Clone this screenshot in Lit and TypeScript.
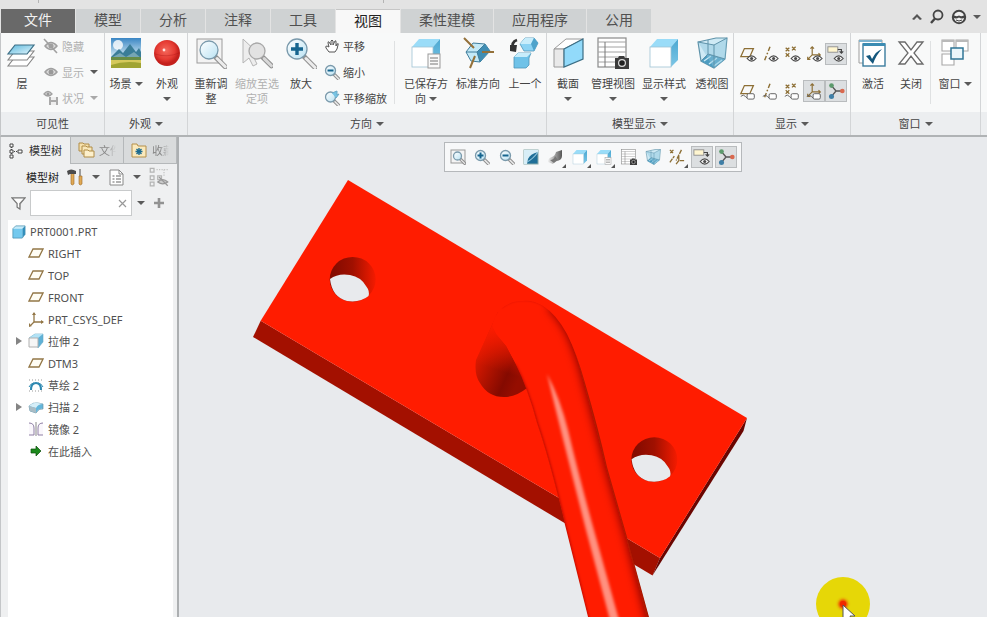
import { LitElement, html, svg, css, nothing, TemplateResult, SVGTemplateResult } from "lit";
import { customElement, state } from "lit/decorators.js";

type Art = SVGTemplateResult;

const draw = (art: Art, size: number, box = size): TemplateResult =>
  html`<svg class="icon" width=${size} height=${size} viewBox="0 0 ${box} ${box}" aria-hidden="true">${art}</svg>`;

/* ---------- shared fragments ---------- */
const lens = (cx: number, cy: number, r: number, w: number, mono = false): Art => svg`
  <path d="M${cx + r * 0.75} ${cy + r * 0.8}L${cx + r * 1.8} ${cy + r * 1.85}" stroke="#909090" stroke-width=${w + 2} stroke-linecap="round"/>
  <path d="M${cx + r * 0.9} ${cy + r * 0.95}L${cx + r * 1.8} ${cy + r * 1.85}" stroke=${mono ? "#d8d8d8" : "#ececec"} stroke-width=${w} stroke-linecap="round"/>
  <circle cx=${cx} cy=${cy} r=${r} fill=${mono ? "#e2e2e2" : "url(#glass)"} stroke=${mono ? "#a8a8a8" : "#7a9aac"} stroke-width="1.3"/>`;

const eye = (x: number, y: number, c = "#4a4a4a"): Art => svg`
  <path d="M${x} ${y}q5 -6 10 0q-5 6 -10 0z" fill="#f4f4f4" stroke=${c} stroke-width="1.3"/>
  <circle cx=${x + 5} cy=${y} r="1.7" fill=${c}/>`;

const tag = svg`
  <path d="M2 16q3 -3 5 0t5 2" fill="none" stroke="#666" stroke-width="1.1"/>
  <rect x="9" y="13" width="8" height="6" rx="1.5" fill="#fff" stroke="#666" stroke-width="1.1"/>`;

const plane = svg`<path d="M6 4h10l-4 9H2z" fill="none" stroke="#8d6f35" stroke-width="1.4"/>`;
const axis = svg`<path d="M10 2L4 17" stroke="#8d6f35" stroke-width="1.6" stroke-dasharray="5 2 2 2"/>`;
const points = svg`<path d="M3 3l4 4m0-4l-4 4M10 2l4 4m0-4l-4 4M3 9l4 4m0-4l-4 4" stroke="#8d6f35" stroke-width="1.4"/>`;
const csys = svg`<path d="M8 2v9h9M8 11l-5 5M6 4l2-2 2 2M15 9l2 2-2 2M3 13v3h3" fill="none" stroke="#8d6f35" stroke-width="1.3"/>`;
const noteArt = svg`
  <rect x="1" y="2" width="11" height="6" fill="#fff6d0" stroke="#8d8d8d"/>
  <path d="M12 5h4v4M14 7l2 2 2-2" fill="none" stroke="#444" stroke-width="1.3"/>${eye(8, 15)}`;
const spin = svg`
  <path d="M5 4L10 10L17 10M10 10L5 16" fill="none" stroke="#555" stroke-width="1.5"/>
  <circle cx="5" cy="4" r="2.6" fill="#5c9a6c"/><circle cx="17" cy="10" r="2.6" fill="#d9694f"/>
  <circle cx="5" cy="16" r="2.8" fill="#3f7fa6"/>`;
const cubeArt = svg`
  <path d="M2 10L9 2H30L23 10z" fill="#9adcf8"/><path d="M23 10L30 2V23L23 30z" fill="url(#cubeSide)"/>
  <rect x="2" y="10" width="21" height="20" fill="#fff" stroke="#9fc3d4" stroke-width=".8"/>`;
const sheet = svg`
  <rect x="18" y="17" width="12" height="14" fill="#fafafa" stroke="#999"/>
  <path d="M20 21h8M20 24h8M20 27h8" stroke="#777"/>`;
const camera = svg`
  <path d="M18 21h3l1-2h5l1 2h4v11H18z" fill="#3c3c3c"/><circle cx="25" cy="26" r="3.4" fill="#222" stroke="#ddd" stroke-width="1.2"/>`;
const table = svg`
  <rect x="1" y="1" width="28" height="29" fill="#fff" stroke="#8a8a8a" stroke-width="1.2"/>
  <path d="M1 5h28M1 10h28M1 15h28M1 20h28M1 25h28" stroke="#a2a2a2"/><path d="M8 5v25" stroke="#777"/>`;
const glassBox = svg`
  <path d="M2 5L20 1H31L29 22L18 31L5 24z" fill="#cfeaf5" stroke="#5f93aa" stroke-width="1.2"/>
  <path d="M5 24L12 17L29 22L18 31z" fill="#4d9cc0"/><path d="M8 24l7-5M13 27l8-6M18 29l8-6" stroke="#c9e9f5" stroke-width="1.4"/>
  <path d="M2 5L18 8L31 1L29 22L18 31z" fill="#8ac5de" fill-opacity=".45"/>
  <path d="M2 5L18 8L31 1M18 8V31M12 3V17L5 24M12 17L29 22" fill="none" stroke="#5f93aa"/>`;
const gem = (x: number, y: number): Art => svg`
  <path d="M${x} ${y + 6}l5-6h9l4 5-4 8h-10z" fill="#8bd3f4" stroke="#4e96b8" stroke-width=".8"/>
  <path d="M${x} ${y + 6}l5-6h9l-3 6z" fill="#c8edfb"/><path d="M${x + 11} ${y + 6}l3-6 4 5-4 8z" fill="#4ea3cb"/>`;

/* ---------- ribbon art, 32px ---------- */
const A: Record<string, Art> = {
  layers: svg`
    <path d="M9 20h19l-7 9H2z" fill="#fff" stroke="#858585" stroke-width="1.1"/>
    <path d="M9 14h19l-7 9H2z" fill="#fff" stroke="#858585" stroke-width="1.1"/>
    <path d="M9 8h19l-7 9H2z" fill="url(#sheetBlue)" stroke="#3c6f86" stroke-width="1.2"/>`,
  scene: svg`
    <rect x="1" y="1" width="30" height="30" fill="url(#sky)"/><circle cx="8" cy="8" r="5" fill="#fff" opacity=".8"/>
    <path d="M1 20L9 12l4 4 7-9 6 8 3-4 2 4v6H1z" fill="#3a7d98"/><path d="M1 21l9-5 6 4 8-5 7 6v2H1z" fill="#76a6b4"/>
    <path d="M1 20h30v11H1z" fill="#d5c95c"/><path d="M1 20h30v3H1z" fill="#678c46"/><path d="M1 28q14-5 30-2v5H1z" fill="#a0a433"/>`,
  ball: svg`<circle cx="16" cy="16" r="13" fill="url(#redBall)"/><path d="M4 17q12 4 24-1" stroke="#a91414" fill="none" opacity=".35"/><circle cx="13" cy="13" r="1.4" fill="#ffe4e0"/>`,
  refit: svg`<rect x="2" y="2" width="25" height="24" fill="#f3f3f3" stroke="#9b9b9b"/>${lens(14, 13, 9, 3)}`,
  zoomSel: svg`<path d="M2 2V26l6-5 4 8 4-2-4-8h8z" fill="#ededed" stroke="#b5b5b5"/>${lens(16, 14, 8, 3, true)}`,
  zoomIn: svg`${lens(12, 12, 10, 3)}<path d="M12 6v12M6 12h12" stroke="#16658f" stroke-width="3.4"/>`,
  saved: svg`${cubeArt}${sheet}`,
  orient: svg`
    <path d="M4 15L11 6l12 1 5 7-10 11L9 24z" fill="#c3e9f7" stroke="#3f7d9b"/>
    <path d="M15 15l8-8 5 7-10 11z" fill="#3f8db3"/><path d="M4 15h11l8-8M15 15l3 10" fill="none" stroke="#3f7d9b"/>
    <path d="M2 1L12 11M20 15h12M13 19L8 31" stroke="#94713a" stroke-width="2"/>`,
  previous: svg`<path d="M8 3Q2 5 4 12" fill="none" stroke="#333" stroke-width="2.600"/><path d="M1 8l7 0-1 7-6-1z" fill="#333"/>
    ${gem(11, 1)}<path d="M5 20l4-4h13l-2 5v7l-3 3H5z" fill="#6fc2e8" stroke="#4e96b8" stroke-width=".8"/><path d="M5 20l4-4h13l-4 4z" fill="#c8edfb"/>`,
  section: svg`
    <path d="M2 12L14 2H31L12 12z" fill="#fff" stroke="#9a9a9a"/><path d="M2 12h10v18H2z" fill="#e9e9e9" stroke="#9a9a9a"/>
    <path d="M12 12L31 2V22L12 30z" fill="#92dafa" stroke="#3b6e85" stroke-width="1.2"/>`,
  views: svg`${table}${camera}`,
  style: cubeArt,
  perspective: glassBox,
  activate: svg`
    <path d="M2 3h23v23H2z" fill="#fff" stroke="#9c9c9c"/><path d="M2 3h23v2H2z" fill="#7fb4cf"/>
    <rect x="6" y="7" width="22" height="22" fill="#fff" stroke="#3b7d9e" stroke-width="1.4"/><path d="M6 6h22v3H6z" fill="#3b8cb3"/>
    <path d="M9 19l4-1 2 4q4-8 10-10-6 6-9 15z" fill="#14577d"/>`,
  close: svg`<path d="M4 5h6l6 8 6-8h6l-9 11 9 11h-6l-6-8-6 8H4l9-11z" fill="#fff" stroke="#6b6b6b" stroke-width="1.3"/>`,
  windows: svg`
    <path d="M3 3h12v11H3zM17 3h12v11H17zM3 17h12v11H3z" fill="#fff" stroke="#a8a8a8" stroke-width="1.1"/><path d="M3 3h12v2H3zM17 3h12v2H17z" fill="#b9b9b9"/>
    <rect x="12" y="11" width="12" height="11" fill="#eaf6fb" stroke="#2f7596" stroke-width="1.5"/>`,
};

/* ---------- small art, 16px ---------- */
const S: Record<string, Art> = {
  hide: svg`<path d="M2 8q6-7 12 0q-6 7-12 0z" fill="#ddd" stroke="#a0a0a0" stroke-width="1.5"/><circle cx="8" cy="8" r="2.5" fill="#a0a0a0"/><path d="M1 1L14 15" stroke="#a0a0a0" stroke-width="1.6"/>`,
  show: svg`<path d="M2 8q6-7 12 0q-6 7-12 0z" fill="#ddd" stroke="#a0a0a0" stroke-width="1.5"/><circle cx="8" cy="8" r="2.5" fill="#999"/>`,
  status: svg`<path d="M1 4q4-5 8 0q-4 4-8 0z" fill="#ddd" stroke="#a0a0a0" stroke-width="1.3"/><circle cx="5" cy="4" r="1.5" fill="#999"/><path d="M6 7h9v8H6z" fill="#aaa"/><path d="M8 7h5v3H8zM8 12h5v3H8z" fill="#eee"/>`,
  pan: svg`<path d="M5 14L2 10Q1 8 3 8L5 9 4 5Q4 3 5 4L7 7 7 3Q8 1 9 3L9 7 11 3Q12 2 12 4L12 8 13 6Q15 5 14 7L13 11 11 14z" fill="#fff" stroke="#555"/>`,
  zoomOut: svg`${lens(6.5, 6.5, 5, 1.5)}<path d="M3.5 6.5h6" stroke="#16658f" stroke-width="2"/>`,
  zoomInS: svg`${lens(6.5, 6.5, 5, 1.5)}<path d="M3.5 6.5h6M6.5 3.5v6" stroke="#16658f" stroke-width="2"/>`,
  panZoom: svg`${lens(6.5, 7, 5, 1.5)}<path d="M8 3l5-2v4l2-1-3 4" fill="#76c4e4" stroke="#6aa9c6"/>`,
  refitS: svg`<rect x="1" y="1" width="14" height="13" fill="#f4f4f4" stroke="#999"/>${lens(7.5, 7, 4, 1.2)}`,
  repaint: svg`<rect x="1" y="1" width="14" height="14" fill="#1f6f98" stroke="#8aa"/><path d="M1 1h14v2Q7 5 5 10l-1 5H1z" fill="#d8eef7"/><path d="M15 3Q10 10 4 13" stroke="#8fc3da" stroke-width="1.200" fill="none"/>`,
  render: svg`<path d="M1 13Q1 9 5 8Q8 7 9 3L15 1v6Q15 12 8 12L6 15z" fill="url(#chrome)"/><path d="M3 11q4 0 5-4l3 4-4 3z" fill="#777"/>`,
  folders: svg`<path d="M1 1h4l1 1h5v7H1z" fill="#f6e2ae" stroke="#b08c47"/><path d="M4 4h4l1 1h5v7H4z" fill="#f8e7b9" stroke="#b08c47"/><path d="M6 8h4l1 1h5v6H6z" fill="#fdf0cc" stroke="#b08c47"/>`,
  favorite: svg`<path d="M1 2h5l1 2h8v11H1z" fill="#fae9bc" stroke="#b5904a"/><path d="M8 6v7M4.500 9.500h7M5.500 7l5 5M10.500 7l-5 5" stroke="#1e6c90" stroke-width="1.4"/>`,
  treeTab: svg`<path d="M2 1h3v3H2zM2 7h3v3H2zM2 12h3v3H2zM10 7h4v3h-4z" fill="#fff" stroke="#444"/><path d="M3.500 4v3M3.500 10v2M6 8.500h3" stroke="#444" stroke-dasharray="1 1"/>`,
  tools: svg`<path d="M4 4h3v11q-2 2-3 0z" fill="#e0a955" stroke="#9a6a26" stroke-width=".6"/><path d="M0 2q4-3 9 0v3H3L1 6z" fill="#4b4b4b"/><path d="M13 0v8" stroke="#777" stroke-width="1.400"/><path d="M12 7h3v8q-2 2-3 0z" fill="#e0a955" stroke="#9a6a26" stroke-width=".6"/>`,
  list: svg`<path d="M2 1h9l4 4v11H2z" fill="#fff" stroke="#888"/><path d="M11 1v4h4" fill="none" stroke="#888"/><path d="M4.500 7h2M4.500 10h2M4.500 13h2M8 7h5M8 10h5M8 13h5" stroke="#666" stroke-width="1.200"/>`,
  treeGrey: svg`<path d="M1 1h3v3H1zM1 7h3v3H1zM1 12h3v3H1zM7 7h3v3H7z" fill="none" stroke="#b4b4b4"/><path d="M6 2h9M12 2v5" stroke="#c4c4c4" stroke-dasharray="1 1"/><path d="M7 12q4-4 8 0q-4 3-8 0z" fill="#ccc" stroke="#999"/><path d="M8 8l7 7" stroke="#999"/>`,
  funnel: svg`<path d="M1 2h14L9.500 8v6l-3-2V8z" fill="#fdfdfd" stroke="#777" stroke-width="1.300"/><path d="M9 8l5-5v1l-4 5v5z" fill="#888"/>`,
  part: svg`<path d="M2 5l3-3h10l-3 3z" fill="#c7ecfa"/><path d="M12 5l3-3v9l-3 4z" fill="#2f8fbd"/><path d="M2 5h10v10H2z" fill="#74c9ee"/><path d="M2 5l3-3h10v9l-3 4H2z" fill="none" stroke="#4a92b2" stroke-width=".8"/>`,
  plane: svg`<path d="M5 4h10l-4 8H1z" fill="#fffdf4" stroke="#937747" stroke-width="1.300"/>`,
  csys: svg`<path d="M6 2v9h9" fill="none" stroke="#937747" stroke-width="1.300"/><path d="M6 11l-3 3" stroke="#937747" stroke-width="1.300"/><path d="M4 4l2-3 2 3zM13 9l3 2-3 2zM1 12l3 3-3 1z" fill="#937747"/>`,
  extrude: svg`<path d="M1 5l6-4h8v8l-5 6" fill="#5fb1d6" stroke="#69a9c4" stroke-width=".6"/><path d="M1 5l6-4h8l-5 4z" fill="#b2e2f5"/><path d="M1 5h9v9H1z" fill="#f6f6f6" stroke="#b0b0b0"/>`,
  sketch: svg`<path d="M1 3h14M1 14h14" stroke="#999" stroke-dasharray="1 2"/><path d="M3 13q0-7 5-7t5 7" fill="none" stroke="#2f89b1" stroke-width="2"/><path d="M1 10q2-4 5-4M15 10q-2-4-5-4" fill="none" stroke="#2f89b1"/>`,
  sweep: svg`<path d="M1 7q4-4 9-3l5 1v5q-4-1-7 4l-6-2z" fill="#63b6db" stroke="#6a95a8" stroke-width=".7"/><path d="M1 7q4-4 9-3l5 1q-5 0-7 4z" fill="#d5eef8"/><path d="M1 7l7 2v5l-6-2z" fill="#a9bcc5"/>`,
  mirror: svg`<path d="M1 2q5 0 5 5v7H1M15 2q-5 0-5 5v7h5" fill="#faf7fc" stroke="#8f7fa5"/><path d="M8 1v14" stroke="#888"/>`,
  insert: svg`<path d="M3 6h5V3l5 5-5 5v-3H3z" fill="#1d8a1d" stroke="#0c4d0c" stroke-width=".7"/>`,
};

interface Big { art: string; lines: string[]; w: string; caret?: "inline" | "below"; dim?: boolean; }
interface Small { art: string; label: string; caret?: boolean; dim?: boolean; }

const TABS = ["文件", "模型", "分析", "注释", "工具", "视图", "柔性建模", "应用程序", "公用"];

const TREE: { art: string; label: string; open?: boolean }[] = [
  { art: "plane", label: "RIGHT" }, { art: "plane", label: "TOP" }, { art: "plane", label: "FRONT" },
  { art: "csys", label: "PRT_CSYS_DEF" }, { art: "extrude", label: "拉伸 2", open: true },
  { art: "plane", label: "DTM3" }, { art: "sketch", label: "草绘 2" }, { art: "sweep", label: "扫描 2", open: true },
  { art: "mirror", label: "镜像 2" }, { art: "insert", label: "在此插入" },
];

@customElement("app-root")
export class AppRoot extends LitElement {
  @state() private tab = "视图";

  static styles = css`
    :host {
      display: flex; flex-direction: column; height: 100vh; min-height: 480px; overflow: hidden;
      background: #e3e3e3; color: #444; font: 11px/15px "Noto Sans", "Noto Sans CJK SC", sans-serif;
    }
    * { box-sizing: border-box; }
    button { font: inherit; color: inherit; background: none; border: 0; padding: 0; margin: 0; }
    .icon { display: block; flex: none; }
    .caret { display: inline-block; border: 4px solid transparent; border-top-color: #5a5a5a; border-bottom: 0; flex: none; }
    .dim { color: #b0b0b0; }
    .soft { opacity: .5; }
    .quick { height: 9px; flex: none; display: flex; padding-left: 38px; gap: 344px; }
    .tick { width: 1px; height: 3px; background: #b4b4b4; }
    .tabs { display: flex; gap: 1px; height: 24px; flex: none; padding-left: 1px; }
    .tab { width: 64px; background: #cfd2d3; font-size: 14px; line-height: 20px; color: #505050; padding-bottom: 2px; }
    .tab.wide { width: 92px; }
    .tab.file { width: 74px; background: #696969; color: #f2f2f2; }
    .tab.on { background: #f8f8f8; color: #222; border-top: 1px solid #c6c6c6; }
    .corner { margin-left: auto; display: flex; align-items: center; gap: 6px; padding: 0 6px 8px 0; }
    .ribbon { display: flex; flex: none; background: #f8f9f9; border-left: 1px solid #c4c6c8; border-bottom: 2px solid #b0b3b5; }
    .group { display: flex; flex-direction: column; border-right: 1px solid #d3d5d7; flex: none; }
    .rest { flex: 1; display: flex; flex-direction: column; }
    .rest::before { content: ""; height: 79px; }
    .rest::after { content: ""; height: 23px; background: #eceef0; }
    .body { display: flex; height: 79px; }
    .foot { height: 23px; display: flex; align-items: center; justify-content: center; gap: 4px; background: #eceef0; }
    .big { display: flex; flex-direction: column; align-items: center; padding-top: 4px; gap: 7px; white-space: nowrap; line-height: 15px; }
    .w38 { width: 38px; } .w40 { width: 40px; } .w42 { width: 42px; } .w46 { width: 46px; }
    .w48 { width: 48px; } .w52 { width: 52px; } .w54 { width: 54px; }
    .cap { display: flex; flex-direction: column; align-items: center; }
    .line { display: flex; align-items: center; gap: 3px; height: 15px; }
    .stack { display: flex; flex-direction: column; width: 61px; }
    .stack.long { width: 72px; padding-left: 2px; }
    .small { display: flex; align-items: center; gap: 3px; height: 26px; white-space: nowrap; }
    .small .caret { margin-left: 3px; }
    .push { padding: 0 1px 0 3px; }
    .rule { width: 1px; background: #dfe1e2; margin: 8px 0; }
    .rule.gap { margin-right: 5px; }
    .datum { display: grid; grid-template-columns: repeat(5, 22px); grid-auto-rows: 22px; row-gap: 15px; padding: 10px 3px; height: 79px; }
    .cell { display: grid; place-items: center; width: 22px; height: 22px; border: 1px solid transparent; }
    .cell.on { background: #dcdfe1; border-color: #b9bcbe; }
    .main { flex: 1; display: flex; min-height: 0; }
    .side { width: 179px; flex: none; display: flex; flex-direction: column; background: #eff0f1; border-left: 1px solid #c4c6c8; border-right: 2px solid #acafb1; }
    .ptabs { display: flex; gap: 1px; height: 27px; padding-right: 1px; background: #b5b8ba; }
    .ptab { display: flex; align-items: center; gap: 4px; flex: 1; padding-left: 7px; background: #d9dbdc; color: #888; border-bottom: 1px solid #b5b8ba; }
    .ptab.on { flex: none; width: 69px; background: #eff0f1; color: #333; border-bottom: 0; gap: 5px; }
    .clip { width: 17px; overflow: hidden; white-space: nowrap; text-align: left; mask-image: linear-gradient(90deg, #000 50%, transparent); }
    .bar { display: flex; align-items: center; height: 26px; padding-left: 25px; gap: 8px; color: #222; }
    .filter { display: flex; align-items: center; height: 26px; padding-left: 10px; gap: 4px; margin-bottom: 4px; }
    .field { display: flex; align-items: center; width: 102px; height: 26px; background: #fff; border: 1px solid #c8cacb; padding-right: 4px; }
    .field input { flex: 1; min-width: 0; border: 0; outline: 0; background: none; font: inherit; }
    .filter .caret { margin-left: 1px; }
    .plus { margin-left: 4px; }
    .tree { flex: 1; margin: 0 4px 0 7px; padding: 0; list-style: none; background: #fff; overflow: hidden; color: #505050; }
    .node { display: flex; align-items: center; height: 22px; gap: 4px; padding-left: 8px; }
    .node.root { padding-left: 3px; }
    .twist { width: 6px; margin-right: 2px; border: 4px solid transparent; border-left: 6px solid #848484; border-right: 0; }
    .twist.none { border-left-color: transparent; }
    .view { flex: 1; min-width: 0; position: relative; background: #e8eaed; }
    .model { display: block; width: 100%; height: 100%; }
    .float { position: absolute; left: 265px; top: 5px; width: 298px; height: 30px; display: flex; justify-content: space-between; align-items: center; padding: 0 4px 0 2px; background: #f7f8f9; border: 1px solid #b5b8bb; }
    .more { position: absolute; margin: 17px 0 0 18px; border: 2px solid #555; border-top-color: transparent; border-left-color: transparent; }
  `;

  private big(b: Big) {
    const last = b.lines.length - 1;
    return html`<button class="big ${b.w} ${b.dim ? "dim" : ""}">
      ${draw(A[b.art], 32)}
      <span class="cap">
        ${b.lines.map((t, i) => html`<span class="line">${t}${b.caret === "inline" && i === last ? html`<i class="caret"></i>` : nothing}</span>`)}
        ${b.caret === "below" ? html`<span class="line"><i class="caret"></i></span>` : nothing}
      </span>
    </button>`;
  }

  private small(s: Small) {
    return html`<button class="small ${s.dim ? "dim" : ""}">${draw(S[s.art], 16)}${s.label}${s.caret ? html`<i class="caret ${s.label === "状况" ? "soft" : ""}"></i>` : nothing}</button>`;
  }

  private foot(label: string, caret = true) {
    return html`<div class="foot">${label}${caret ? html`<i class="caret"></i>` : nothing}</div>`;
  }

  private cell(art: Art, label: string, on = false, box = 20, more = false) {
    return html`<button class="cell ${on ? "on" : ""}" aria-label=${label}>${draw(art, box === 20 ? 18 : 16, box)}${more ? html`<i class="more"></i>` : nothing}</button>`;
  }

  private ribbon() {
    return html`<section class="ribbon" aria-label="视图">
      <div class="group">
        <div class="body">
          ${this.big({ art: "layers", lines: ["层"], w: "w42" })}
          <div class="stack">
            ${this.small({ art: "hide", label: "隐藏", dim: true })}
            ${this.small({ art: "show", label: "显示", dim: true, caret: true })}
            ${this.small({ art: "status", label: "状况", dim: true, caret: true })}
          </div>
        </div>
        ${this.foot("可见性", false)}
      </div>
      <div class="group">
        <div class="body">
          ${this.big({ art: "scene", lines: ["场景"], w: "w42", caret: "inline" })}
          ${this.big({ art: "ball", lines: ["外观"], w: "w40", caret: "below" })}
        </div>
        ${this.foot("外观")}
      </div>
      <div class="group">
        <div class="body">
          ${this.big({ art: "refit", lines: ["重新调", "整"], w: "w46" })}
          ${this.big({ art: "zoomSel", lines: ["缩放至选", "定项"], w: "w46", dim: true })}
          ${this.big({ art: "zoomIn", lines: ["放大"], w: "w42" })}
          <div class="stack long">
            ${this.small({ art: "pan", label: "平移" })}
            ${this.small({ art: "zoomOut", label: "缩小" })}
            ${this.small({ art: "panZoom", label: "平移缩放" })}
          </div>
          <div class="rule gap"></div>
          ${this.big({ art: "saved", lines: ["已保存方", "向"], w: "w52", caret: "inline" })}
          ${this.big({ art: "orient", lines: ["标准方向"], w: "w52" })}
          ${this.big({ art: "previous", lines: ["上一个"], w: "w42" })}
        </div>
        ${this.foot("方向")}
      </div>
      <div class="group">
        <div class="body">
          ${this.big({ art: "section", lines: ["截面"], w: "w42", caret: "below" })}
          ${this.big({ art: "views", lines: ["管理视图"], w: "w48", caret: "below" })}
          ${this.big({ art: "style", lines: ["显示样式"], w: "w54", caret: "below" })}
          ${this.big({ art: "perspective", lines: ["透视图"], w: "w42" })}
        </div>
        ${this.foot("模型显示")}
      </div>
      <div class="group">
        <div class="datum">
          ${this.cell(svg`${plane}${eye(9, 15)}`, "平面显示")}
          ${this.cell(svg`${axis}${eye(9, 15)}`, "轴显示")}
          ${this.cell(svg`${points}${eye(9, 15)}`, "点显示")}
          ${this.cell(svg`${csys}${eye(9, 15)}`, "坐标系显示")}
          ${this.cell(noteArt, "注释显示", true)}
          ${this.cell(svg`${plane}${tag}`, "平面标记")}
          ${this.cell(svg`${axis}${tag}`, "轴标记")}
          ${this.cell(svg`${points}${tag}`, "点标记")}
          ${this.cell(svg`${csys}${tag}`, "坐标系标记", true)}
          ${this.cell(spin, "旋转中心", true)}
        </div>
        ${this.foot("显示")}
      </div>
      <div class="group">
        <div class="body push">
          ${this.big({ art: "activate", lines: ["激活"], w: "w38" })}
          ${this.big({ art: "close", lines: ["关闭"], w: "w38" })}
          <div class="rule"></div>
          ${this.big({ art: "windows", lines: ["窗口"], w: "w48", caret: "inline" })}
        </div>
        ${this.foot("窗口")}
      </div>
      <div class="rest"></div>
    </section>`;
  }

  private side() {
    return html`<aside class="side">
      <div class="ptabs">
        <button class="ptab on">${draw(S.treeTab, 16)}模型树</button>
        <button class="ptab">${draw(S.folders, 17, 17)}<span class="clip">文件</span></button>
        <button class="ptab">${draw(S.favorite, 17, 17)}<span class="clip">收藏</span></button>
      </div>
      <div class="bar">模型树
        ${draw(S.tools, 17, 17)}<i class="caret"></i>${draw(S.list, 17, 17)}<i class="caret"></i>${draw(S.treeGrey, 20, 16)}
      </div>
      <div class="filter">
        ${draw(S.funnel, 15, 16)}
        <span class="field"><input type="text" aria-label="过滤" />
          <button aria-label="清除">${draw(svg`<path d="M1 1l7 7M8 1l-7 7" stroke="#999" stroke-width="1.2"/>`, 9)}</button></span>
        <i class="caret"></i>
        <button class="plus" aria-label="添加">${draw(svg`<path d="M6 1v10M1 6h10" stroke="#929292" stroke-width="2.6"/>`, 12)}</button>
      </div>
      <ul class="tree">
        <li class="node root">${draw(S.part, 15, 16)}PRT0001.PRT</li>
        ${TREE.map((n) => html`<li class="node"><i class="twist ${n.open ? "" : "none"}"></i>${draw(S[n.art], 16)}${n.label}</li>`)}
      </ul>
    </aside>`;
  }

  private model() {
    const rod = "M588 617L565 525Q550 461 537 423Q528 389 515 363L506 346L496 334L492 326Q494 316 501 309Q510 301 523 301Q533 300 543 306Q556 314 567 334Q577 354 585 383Q598 427 607 467L627 537L649 617L649 630L590 630z";
    const leg = "M498 312L476 360Q474 375 480 383Q488 397 504 397Q516 397 527 388L540 350L520 315z";
    const hole = svg`
      <ellipse cx="352.700" cy="279.300" rx="23" ry="22.400" fill="url(#bore)"/>
      <path d="M330 279Q338 273 350 275Q361 277 366 286Q370 291 368.500 296Q360 303 347 301Q332 297 330 279z" fill="#e8eaed"/>`;
    return html`<svg class="model" viewBox="179 137 808 480" preserveAspectRatio="xMinYMin slice" role="img" aria-label="PRT0001">
      <defs>
        <linearGradient id="glass" x1="0" y1="0" x2="1" y2="1"><stop offset="0" stop-color="#fff"/><stop offset="1" stop-color="#b9e2f3"/></linearGradient>
        <linearGradient id="sheetBlue" x1="0" y1="0" x2="1" y2="1"><stop offset="0" stop-color="#5cb8dc"/><stop offset="1" stop-color="#e3f6fd"/></linearGradient>
        <linearGradient id="cubeSide" x1="0" y1="0" x2="0" y2="1"><stop offset="0" stop-color="#4ba8d2"/><stop offset="1" stop-color="#7cc6e6"/></linearGradient>
        <linearGradient id="sky" x1="0" y1="0" x2="0" y2="1"><stop offset="0" stop-color="#3a86c4"/><stop offset=".6" stop-color="#cde6f2"/></linearGradient>
        <linearGradient id="chrome"><stop offset="0" stop-color="#eee"/><stop offset="1" stop-color="#555"/></linearGradient>
        <radialGradient id="redBall" cx=".45" cy=".4"><stop offset="0" stop-color="#f4695c"/><stop offset=".7" stop-color="#e53a32"/><stop offset="1" stop-color="#c4201c"/></radialGradient>
        <linearGradient id="bore"><stop offset=".1" stop-color="#850b00"/><stop offset=".5" stop-color="#a01000"/><stop offset="1" stop-color="#f41b00"/></linearGradient>
        <linearGradient id="leg" gradientUnits="userSpaceOnUse" x1="477" y1="352" x2="522" y2="372"><stop offset="0" stop-color="#e01900"/><stop offset=".45" stop-color="#a81100"/><stop offset=".75" stop-color="#840a00"/><stop offset="1" stop-color="#950d00"/></linearGradient>
        <linearGradient id="legFade" gradientUnits="userSpaceOnUse" x1="503" y1="326" x2="490" y2="368"><stop offset="0" stop-color="#ff1c00"/><stop offset=".2" stop-color="#ff1c00" stop-opacity=".8"/><stop offset="1" stop-color="#ff1c00" stop-opacity="0"/></linearGradient>
        <filter id="blur6" x="-50%" y="-50%" width="200%" height="200%"><feGaussianBlur stdDeviation="5"/></filter>
        <filter id="blur2" x="-50%" y="-50%" width="200%" height="200%"><feGaussianBlur stdDeviation="1.600"/></filter>
        <clipPath id="rodClip"><path d=${rod}/></clipPath>
      </defs>
      <path d="M260.700 320.700L253 337L652.500 575.500L660 558z" fill="#a31000"/>
      <path d="M660 558L652.500 575.500L743.500 431L747 418z" fill="#6a0500"/>
      <path d="M348 180L747 418L660 558L260.700 320.700z" fill="#ff1c00"/>
      <g>${hole}</g><g transform="translate(301.600 180.300)">${hole}</g>
      <path d=${leg} fill="url(#leg)"/>
      <path d=${leg} fill="url(#legFade)"/>
      <g clip-path="url(#rodClip)">
        <path d=${rod} fill="#ff1c00"/>
        <path d="M500 306Q512 297 525 298Q537 298 548 306" fill="none" stroke="#b01200" stroke-width="3" filter="url(#blur2)"/>
        <path d="M552 304Q564 316 572 332Q582 354 589 383Q601 427 611 467L631 537L655 630" fill="none" stroke="#7c0800" stroke-width="11" filter="url(#blur6)"/>
        <path d="M590 630L564 525Q549 461 536 423Q527 389 514 365" fill="none" stroke="#a80f00" stroke-width="3" filter="url(#blur2)"/>
        <path d="M547 374Q560 398 568 430Q578 472 592 523L619 620L610 620L586 530Q570 467 562 435Q554 403 547 374z" fill="#ff9180" filter="url(#blur2)"/>
      </g>
      <circle cx="843" cy="604" r="27" fill="#e6d707"/>
      <circle cx="843" cy="604" r="4.500" fill="#f02800" filter="url(#blur2)"/><circle cx="843" cy="604" r="3" fill="#f02800"/>
      <path d="M843 605V622L847 618L850 625L853 624L850 616H855z" fill="#fff" stroke="#555" stroke-width="1"/>
    </svg>`;
  }

  private float() {
    const half = (a: Art) => svg`<g transform="scale(.5)">${a}</g>`;
    return html`<div class="float" role="toolbar" aria-label="图形工具栏">
      ${this.cell(S.refitS, "重新调整", false, 16)}
      ${this.cell(S.zoomInS, "放大", false, 16)}
      ${this.cell(S.zoomOut, "缩小", false, 16)}
      ${this.cell(S.repaint, "重画", false, 16)}
      ${this.cell(S.render, "渲染选项", false, 16, true)}
      ${this.cell(half(cubeArt), "显示样式", false, 16, true)}
      ${this.cell(half(A.saved), "已保存方向", false, 16, true)}
      ${this.cell(half(A.views), "管理视图", false, 16)}
      ${this.cell(half(glassBox), "透视图", false, 16)}
      ${this.cell(svg`<path d="M1 1l4 4m0-4L1 5M14 1L8 13M1 15l5-7M11 8v5h6M11 13l-3 4" fill="none" stroke="#8d6f35" stroke-width="1.5" stroke-dasharray="5 1"/>`, "基准显示", false, 18, true)}
      ${this.cell(noteArt, "注释显示", true)}
      ${this.cell(spin, "旋转中心", true)}
    </div>`;
  }

  render() {
    return html`
      <div class="quick"><span class="tick"></span><span class="tick"></span></div>
      <nav class="tabs">
        ${TABS.map((t) => html`<button class="tab ${t === "文件" ? "file" : ""} ${t.length > 2 ? "wide" : ""} ${t === this.tab ? "on" : ""}" @click=${() => (this.tab = t)}>${t}</button>`)}
        <div class="corner">
          <button aria-label="最小化功能区">${draw(svg`<path d="M1 8l5-5 5 5-2 1-3-3-3 3z" fill="#555"/>`, 12)}</button>
          <button aria-label="搜索">${draw(svg`<circle cx="9" cy="6" r="4.500" fill="none" stroke="#444" stroke-width="1.800"/><path d="M6 9.500L2 14" stroke="#444" stroke-width="2.400"/>`, 16)}</button>
          <button aria-label="帮助">${draw(svg`<circle cx="8" cy="8" r="6.200" fill="#f0f0f0" stroke="#444" stroke-width="2"/><path d="M2 5.500q3 3 6 1q3 2 6-1v3q-3 2-6 0q-3 2-6 0z" fill="#444"/><path d="M5 11q3 2 6 0" stroke="#444" fill="none"/>`, 16)}</button>
          <i class="caret"></i>
        </div>
      </nav>
      ${this.ribbon()}
      <main class="main">${this.side()}<div class="view">${this.model()}${this.float()}</div></main>`;
  }
}
